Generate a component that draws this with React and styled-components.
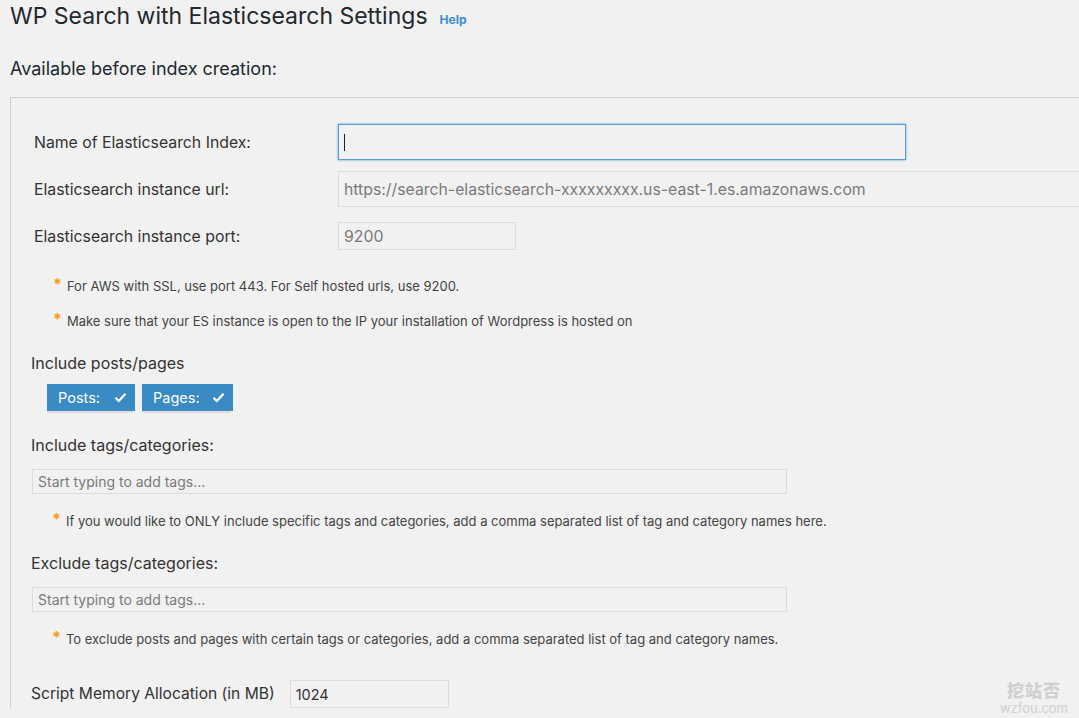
import React from 'react';
import styled, { createGlobalStyle } from 'styled-components';

const GlobalStyle = createGlobalStyle`
  html, body {
    margin: 0;
    padding: 0;
    background: #f1f1f1;
    overflow: hidden;
  }
  body {
    font-family: Inter, "Liberation Sans", Arial, sans-serif;
    color: #23282d;
  }
`;

// 페이지 전체
const Page = styled.div`
  width: 1079px;
  height: 718px;
  overflow: hidden;
  padding: 0 0 0 10px;
  box-sizing: border-box;
  position: relative;
`;

const TitleRow = styled.div`
  display: flex;
  align-items: baseline;
  gap: 12px;
  padding-top: 2px;
  height: 34px;
`;

const Title = styled.h1`
  margin: 0;
  font-size: 23px;
  font-weight: 400;
  line-height: 29px;
  color: #23282d;
`;

const HelpLink = styled.a`
  font-size: 12px;
  font-weight: 700;
  color: #3b8fd0;
  text-decoration: none;
`;

const SectionTitle = styled.h2`
  margin: 21px 0 0;
  font-size: 18px;
  font-weight: 400;
  line-height: 24px;
  color: #23282d;
`;

// 설정 패널
const Panel = styled.div`
  margin-top: 16px;
  width: 1200px;
  border-top: 1px solid #cfcfcf;
  border-left: 1px solid #cfcfcf;
  padding: 26px 0 0 20px;
  box-sizing: border-box;
`;

const FieldTable = styled.div`
  display: grid;
  grid-template-columns: 304px auto;
  grid-auto-rows: 36px;
  row-gap: 11px;
  align-items: center;
  padding-left: 3px;
`;

const Label = styled.label`
  font-size: 15.8px;
  color: #333;
`;

const TextBox = styled.div`
  box-sizing: border-box;
  width: ${(p) => p.$width}px;
  height: ${(p) => p.$height}px;
  border: 1px solid ${(p) => (p.$focused ? '#5b9dd9' : '#dcdcdc')};
  box-shadow: ${(p) => (p.$focused ? '0 0 2px rgba(30,140,190,0.8)' : 'none')};
  background: #f1f1f1;
  display: flex;
  align-items: center;
  padding-left: 5px;
  font-size: ${(p) => p.$size || 15.8}px;
  color: ${(p) => (p.$muted ? '#7a7a7a' : '#333')};
  white-space: nowrap;
  overflow: hidden;
`;

const Caret = styled.span`
  display: block;
  width: 1px;
  height: 17px;
  background: #222;
`;

const Notes = styled.div`
  padding: 24px 0 0 22px;
  display: flex;
  flex-direction: column;
  gap: 19px;
`;

const Note = styled.div`
  display: flex;
  align-items: flex-start;
  gap: 5px;
  font-size: 13px;
  color: #444;
  line-height: 16px;
  padding-left: ${(p) => p.$indent || 0}px;
  margin-top: ${(p) => p.$top || 0}px;
`;

const Star = styled.span`
  color: #f39c12;
  font-size: 16px;
  line-height: 12px;
  font-weight: 700;
`;

const GroupLabel = styled.div`
  font-size: ${(p) => p.$size || 16}px;
  color: #333;
  margin-top: ${(p) => p.$top}px;
  line-height: 20px;
`;

const ToggleRow = styled.div`
  display: flex;
  gap: 7px;
  margin: 11px 0 0 16px;
`;

const Toggle = styled.div`
  box-sizing: border-box;
  width: ${(p) => p.$width}px;
  height: 27px;
  background: #3a8bc4;
  color: #fff;
  font-size: 14.5px;
  display: flex;
  align-items: center;
  justify-content: space-between;
  padding: 0 8px 0 11px;
  box-shadow: -1px 3px 0 -1px #dedede;
`;

const TagBox = styled(TextBox)`
  margin: 14px 0 0 1px;
`;

const MemoryRow = styled.div`
  display: flex;
  align-items: center;
  gap: 15px;
  margin-top: 33px;
`;

const Watermark = styled.div`
  position: absolute;
  right: 11px;
  bottom: 3px;
  display: flex;
  flex-direction: column;
  align-items: center;
  color: #d0d0d0;
  line-height: 1;
`;

const WatermarkCn = styled.span`
  font-family: "Noto Sans CJK SC", sans-serif;
  font-weight: 900;
  font-size: 17px;
  line-height: 18px;
  letter-spacing: 1px;
`;

const WatermarkEn = styled.span`
  font-size: 13px;
  line-height: 13px;
  margin-top: 3px;
`;

function Check() {
  return (
    <svg width="13" height="11" viewBox="0 0 13 11">
      <path d="M1.5 5.8 L4.8 9 L11.5 1.8" fill="none" stroke="#fff" strokeWidth="2.2" />
    </svg>
  );
}

function App() {
  return (
    <Page>
      <GlobalStyle />
      <TitleRow>
        <Title>WP Search with Elasticsearch Settings</Title>
        <HelpLink href="#">Help</HelpLink>
      </TitleRow>
      <SectionTitle>Available before index creation:</SectionTitle>

      <Panel>
        <FieldTable>
          <Label>Name of Elasticsearch Index:</Label>
          <TextBox $width={568} $height={36} $focused>
            <Caret />
          </TextBox>
          <Label>Elasticsearch instance url:</Label>
          <TextBox $width={800} $height={36} $muted>
            https://search-elasticsearch-xxxxxxxxx.us-east-1.es.amazonaws.com
          </TextBox>
          <Label>Elasticsearch instance port:</Label>
          <TextBox $width={178} $height={28} $muted>
            9200
          </TextBox>
        </FieldTable>

        <Notes>
          <Note>
            <Star>*</Star>
            For AWS with SSL, use port 443. For Self hosted urls, use 9200.
          </Note>
          <Note>
            <Star>*</Star>
            Make sure that your ES instance is open to the IP your installation of Wordpress is hosted on
          </Note>
        </Notes>

        <GroupLabel $top={24}>Include posts/pages</GroupLabel>
        <ToggleRow>
          <Toggle $width={88}>
            Posts: <Check />
          </Toggle>
          <Toggle $width={91}>
            Pages: <Check />
          </Toggle>
        </ToggleRow>

        <GroupLabel $top={24}>Include tags/categories:</GroupLabel>
        <TagBox $width={755} $height={25} $muted $size={14}>
          Start typing to add tags...
        </TagBox>
        <Note $indent={21} $top={19}>
          <Star>*</Star>
          If you would like to ONLY include specific tags and categories, add a comma separated list of tag and category names here.
        </Note>

        <GroupLabel $top={24}>Exclude tags/categories:</GroupLabel>
        <TagBox $width={755} $height={25} $muted $size={14}>
          Start typing to add tags...
        </TagBox>
        <Note $indent={21} $top={19}>
          <Star>*</Star>
          To exclude posts and pages with certain tags or categories, add a comma separated list of tag and category names.
        </Note>

        <MemoryRow>
          <GroupLabel $top={0} $size={15.6}>Script Memory Allocation (in MB)</GroupLabel>
          <TextBox $width={159} $height={28} $size={14.5}>
            1024
          </TextBox>
        </MemoryRow>
      </Panel>

      <Watermark>
        <WatermarkCn>挖站否</WatermarkCn>
        <WatermarkEn>wzfou.com</WatermarkEn>
      </Watermark>
    </Page>
  );
}

export default App;
